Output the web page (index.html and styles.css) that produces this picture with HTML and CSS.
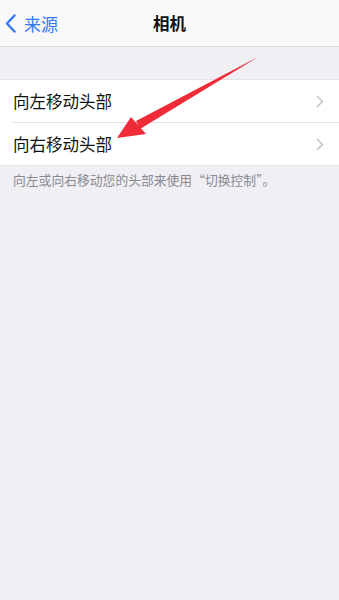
FILE: index.html
```html
<!DOCTYPE html>
<html lang="zh-CN">
<head>
    <meta charset="UTF-8">
    <meta name="viewport" content="width=device-width, initial-scale=1.0">
    <title>相机</title>
    <link rel="stylesheet" href="styles.css">
</head>
<body>
    <div class="page">
        <div class="navbar">
            <a class="back" href="#">
                <svg class="back-icon" width="11" height="19" viewBox="0 0 11 19">
                    <path d="M9.5 1.5 L2 9.5 L9.5 17.5" fill="none" stroke="#3478f6" stroke-width="2.4" stroke-linecap="round" stroke-linejoin="round"/>
                </svg>
                <span>来源</span>
            </a>
            <div class="title">相机</div>
        </div>

        <div class="group">
            <div class="row">
                <span>向左移动头部</span>
                <svg class="chevron" width="8" height="13" viewBox="0 0 8 13">
                    <path d="M1.5 1.5 L6.5 6.5 L1.5 11.5" fill="none" stroke="#c4c4c7" stroke-width="1.6" stroke-linecap="round" stroke-linejoin="round"/>
                </svg>
            </div>
            <div class="row">
                <span>向右移动头部</span>
                <svg class="chevron" width="8" height="13" viewBox="0 0 8 13">
                    <path d="M1.5 1.5 L6.5 6.5 L1.5 11.5" fill="none" stroke="#c4c4c7" stroke-width="1.6" stroke-linecap="round" stroke-linejoin="round"/>
                </svg>
            </div>
        </div>
        <p class="footer">向左或向右移动您的头部来使用“切换控制”。</p>

        <!-- 标注箭头 -->
        <svg class="arrow" width="339" height="200" viewBox="0 0 339 200">
            <polygon points="258,57 136,121 140,129" fill="#ee2b36"/>
            <polygon points="117,138 131,117 146,134" fill="#ee2b36"/>
        </svg>
    </div>
</body>
</html>
```

FILE: styles.css
```css
body {
    margin: 0;
    background-color: #efeff4;
    font-family: 'Noto Sans CJK SC', 'Noto Sans', sans-serif;
}
.page {
    position: relative;
    width: 339px;
    min-height: 600px;
    background-color: #efeff4;
}
.navbar {
    position: relative;
    height: 47px;
    background-color: #f8f8f9;
    border-bottom: 1px solid #dcdcdf;
    display: flex;
    align-items: center;
    justify-content: center;
    box-sizing: border-box;
}
.back {
    position: absolute;
    left: 5px;
    top: 0;
    height: 100%;
    display: flex;
    align-items: center;
    gap: 8px;
    color: #3478f6;
    text-decoration: none;
    font-size: 17px;
}
.back-icon {
    display: block;
}
.title {
    font-size: 16.5px;
    font-weight: bold;
    color: #111;
}
.group {
    margin-top: 32px;
    background-color: #fff;
    border-top: 1px solid #e3e3e6;
    border-bottom: 1px solid #e3e3e6;
}
.row {
    height: 42px;
    display: flex;
    align-items: center;
    justify-content: space-between;
    margin-left: 13px;
    padding-right: 15px;
    font-size: 16.5px;
    color: #111;
}
.row + .row {
    border-top: 1px solid #e3e3e6;
}
.chevron {
    display: block;
}
.footer {
    margin: 5px 13px 0;
    font-size: 12.8px;
    line-height: 18px;
    color: #8a8a8e;
}
.arrow {
    position: absolute;
    left: 0;
    top: 0;
    pointer-events: none;
}
```
